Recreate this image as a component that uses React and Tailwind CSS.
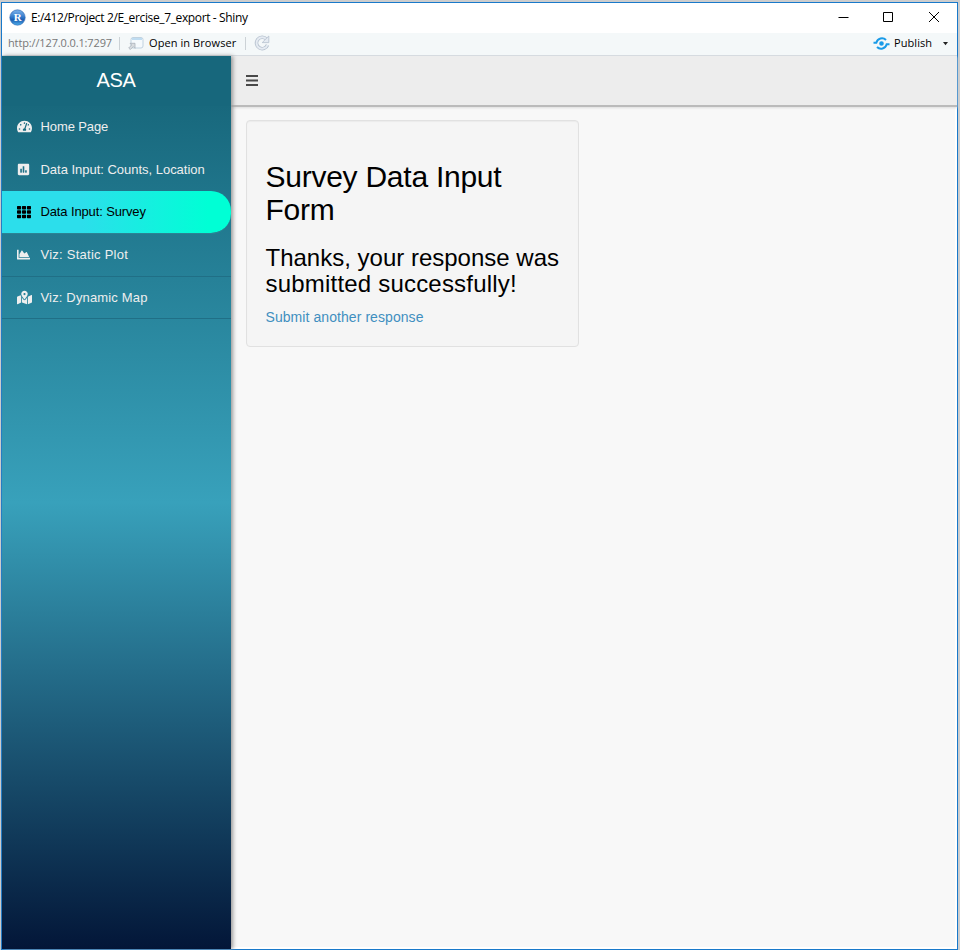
import React from "react";
import { FaTachometerAlt, FaPoll, FaTh, FaChartArea, FaMapMarkedAlt } from "react-icons/fa";

const items = [
  { label: "Home Page", Icon: FaTachometerAlt, size: 15, spacing: "tracking-[-0.1px]" },
  { label: "Data Input: Counts, Location", Icon: FaPoll, size: 13, spacing: "tracking-[-0.02px]" },
  { label: "Data Input: Survey", Icon: FaTh, size: 14, active: true, spacing: "tracking-[-0.13px]" },
  { label: "Viz: Static Plot", Icon: FaChartArea, size: 13, line: true, spacing: "tracking-[0.25px]" },
  { label: "Viz: Dynamic Map", Icon: FaMapMarkedAlt, size: 15, line: true, spacing: "tracking-[0.16px]" },
];

function TitleBar() {
  return (
    <div className="flex h-[30px] shrink-0 items-center bg-white pl-[7px] font-['Open_Sans','Noto_Sans',sans-serif] text-xs text-black">
      <svg className="mb-px" width="17" height="17" viewBox="0 0 17 17">
        <defs>
          <linearGradient id="ball" x1="0" y1="0" x2="0" y2="1">
            <stop offset="0" stopColor="#7db4ec" />
            <stop offset="0.5" stopColor="#2f76c8" />
            <stop offset="0.65" stopColor="#1c5cb0" />
            <stop offset="1" stopColor="#4fb2ee" />
          </linearGradient>
        </defs>
        <circle cx="8.5" cy="8.5" r="7.7" fill="url(#ball)" stroke="#2a62ae" strokeWidth="0.6" />
        <text x="8.8" y="12.2" textAnchor="middle" fontFamily="Liberation Serif, serif" fontWeight="bold" fontSize="11" fill="#fff">R</text>
      </svg>
      <span className="ml-[5px] whitespace-nowrap tracking-[-0.37px]">E:/412/Project 2/E_ercise_7_export - Shiny</span>
      <svg className="mr-4 mb-[3px] ml-auto" width="103" height="12" viewBox="0 0 103 12" fill="none" stroke="#000">
        <path d="M0.5 6.5h10M45.5 1.5h9v9h-9zM91 1l10 10M101 1L91 11" />
      </svg>
    </div>
  );
}

function Toolbar() {
  return (
    <div className="flex h-[23px] shrink-0 items-center border-b border-[#d5dbe0] bg-[#f4f8f9] pb-0.5 pl-1.5 font-['Open_Sans','Noto_Sans',sans-serif] text-[11px] text-black">
      <span className="w-[105px] whitespace-nowrap text-[#777] tracking-[-0.13px]">http://127.0.0.1:7297</span>
      <span className="ml-[6px] h-[13px] w-px bg-[#ccd2d6]" />
      <svg className="ml-2" width="16" height="14" viewBox="0 0 16 14" fill="none">
        <rect x="3" y="1.5" width="12" height="10.5" rx="2" fill="#f5fafd" stroke="#c0d2e0" />
        <path d="M4 3h10" stroke="#bfdcf1" strokeWidth="2" />
        <path d="M0.7 12l3-3-1.7-1.7h5v5l-1.7-1.7-3 3z" fill="#d8dce0" stroke="#a9b2bb" strokeWidth="0.8" />
      </svg>
      <span className="ml-[5px] w-[89px] whitespace-nowrap tracking-[0.08px]">Open in Browser</span>
      <span className="ml-[7px] h-[13px] w-px bg-[#ccd2d6]" />
      <svg className="ml-2" width="16" height="16" viewBox="0 0 16 16" fill="none">
        <path d="M12.5 4.2A5.7 5.7 0 1 0 13.5 10" stroke="#b5c0ce" strokeWidth="3.5" />
        <path d="M12.5 4.2A5.7 5.7 0 1 0 13.5 10" stroke="#e5ebf2" strokeWidth="2" />
        <path d="M14.8 1v6.6H8.2z" fill="#e5ebf2" stroke="#b5c0ce" strokeWidth="0.8" />
      </svg>
      <svg className="ml-auto" width="17" height="13" viewBox="0 0 17 13" fill="none" stroke="#1a9be8" strokeWidth="2">
        <path d="M0.5 5.8h2.8C4.5 1 10 0 13 3M16.5 7.2h-2.8C12.5 12 7 13 4 10" />
        <circle cx="8.5" cy="6.5" r="1.3" fill="#1a9be8" />
      </svg>
      <span className="ml-1 w-[40px] whitespace-nowrap tracking-[0.08px]">Publish</span>
      <svg className="mt-0.5 mr-2 ml-[8px]" width="7" height="4" viewBox="0 0 7 4"><path d="M1 0h5L3.5 3.2z" fill="#222" /></svg>
    </div>
  );
}

function Sidebar() {
  return (
    <aside className="z-10 flex w-[229px] shrink-0 flex-col bg-[linear-gradient(to_bottom,rgb(20,97,117),rgb(56,161,187)_50%,rgb(3,22,56))] shadow-[2px_0_4px_#999]">
      <div className="flex h-[50px] shrink-0 items-center justify-center bg-[#17677c] pr-px pb-0.5 text-xl tracking-[-0.4px] text-white">ASA</div>
      <nav className="text-[13px]">
        {items.map(({ label, Icon, size, active, line, spacing }) => (
          <div
            key={label}
            className={
              "flex h-[42.7px] items-center border-b pl-[14.5px] " +
              (active
                ? "rounded-r-[20px] border-[#2b8495] bg-[linear-gradient(to_right,rgb(44,222,235),rgb(44,222,235)_35%,rgb(0,255,213)_90%)] bg-clip-padding text-black"
                : line
                  ? "border-[#206f86] text-[#eee]"
                  : "border-transparent text-[#eee]")
            }
          >
            <span className="flex w-6 shrink-0"><Icon size={size} /></span>
            <span className={"whitespace-nowrap " + spacing}>{label}</span>
          </div>
        ))}
      </nav>
    </aside>
  );
}

export default function App() {
  return (
    <div className="h-[950px] w-[960px] bg-[#cdcdcd] pt-0.5 pl-px font-['Liberation_Sans',Arial,sans-serif]">
      <div className="flex h-[948px] w-[957px] flex-col border border-[#1979ca]">
        <TitleBar />
        <Toolbar />
        <div className="flex min-h-0 grow bg-[#f8f8f8]">
          <Sidebar />
          <div className="flex grow flex-col border-r-2 border-b-2 border-white">
            <header className="-mr-0.5 flex h-[51px] shrink-0 items-center border-b-2 border-[#bbb] bg-[#ededed] pl-[15px] shadow-[0_1px_2px_#ddd]">
              <svg width="12" height="11" viewBox="0 0 12 11" stroke="#484848" strokeWidth="2"><path d="M0 1h12M0 5.5h12M0 10h12" /></svg>
            </header>
            <main className="pt-[13px] pl-[15px]">
              <section className="h-[227px] w-[333px] rounded border border-[#e1e1e1] bg-[#f5f5f5] pt-[39px] pl-[18.5px] text-black shadow-[inset_0_1px_1px_#ebebeb]">
                <h1 className="text-[30px] leading-[33px] tracking-[-0.25px]">Survey Data Input<br />Form</h1>
                <h2 className="mt-[19px] text-2xl leading-[26px] whitespace-nowrap">Thanks, your response was<br /><span className="tracking-[0.2px]">submitted successfully!</span></h2>
                <a className="mt-[10px] block text-sm leading-5 tracking-[0.07px] text-[#3f8fc0]">Submit another response</a>
              </section>
            </main>
          </div>
        </div>
      </div>
    </div>
  );
}
